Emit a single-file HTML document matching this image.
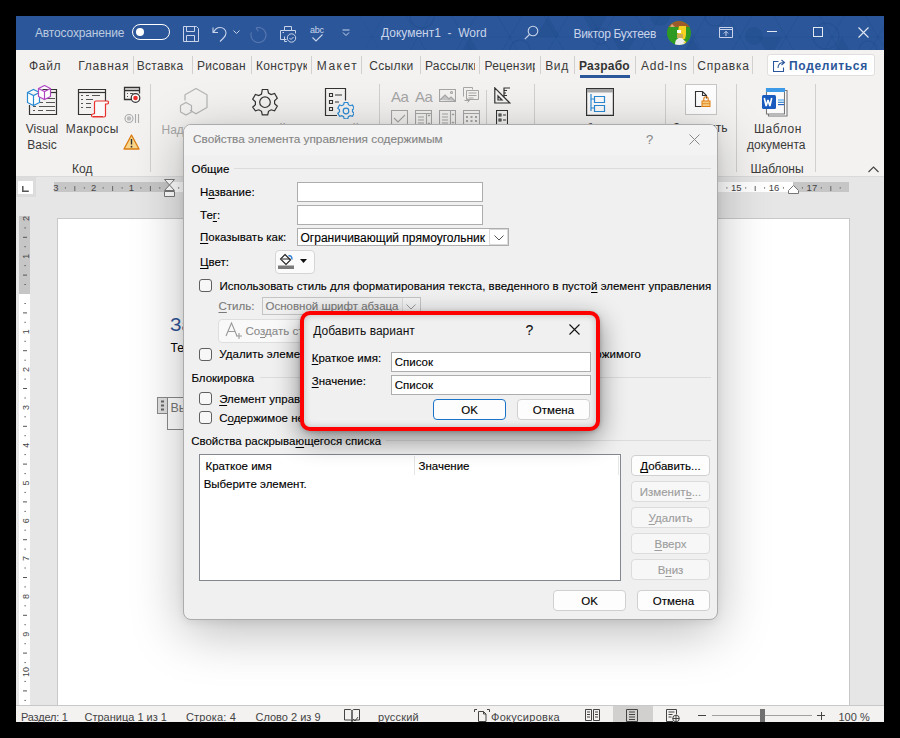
<!DOCTYPE html>
<html><head><meta charset="utf-8">
<style>
*{box-sizing:border-box}
body{margin:0;width:900px;height:738px;background:#000;position:relative;overflow:hidden;font-family:"Liberation Sans",sans-serif;color:#000}
.a{position:absolute}
.t{position:absolute;white-space:nowrap;line-height:1}
.dt,.btn{-webkit-text-stroke:0.12px currentColor}
#title{left:16px;top:16px;width:868px;height:34px;background:#2b579a}
#tabs{left:16px;top:50px;width:868px;height:32px;background:#f3f2f1}
#ribbon{left:16px;top:82px;width:868px;height:95px;background:#f3f2f1;border-bottom:1px solid #dadada}
#docarea{left:16px;top:177px;width:868px;height:528px;background:#e6e6e6}
#status{left:16px;top:705px;width:868px;height:17px;background:#f3f2f1;border-top:1px solid #c8c8c8}
.tab{position:absolute;top:60px;font-size:12px;color:#3b3a39;white-space:nowrap;line-height:12px}
.sep{position:absolute;top:56px;width:1px;height:18px;background:#d2d0ce}
.rsep{position:absolute;width:1px;background:#d2d0ce}
.rl{position:absolute;font-size:12px;color:#3b3a39;white-space:nowrap;line-height:15.5px;text-align:center}
.st{position:absolute;top:712px;font-size:11px;color:#444;white-space:nowrap;line-height:11px}
/* dialog */
#dlg{left:183px;top:124px;width:535px;height:496px;background:#f0f0f0;border:1px solid #ababab;border-radius:8px;box-shadow:0 12px 52px rgba(0,0,0,.27), 0 2px 8px rgba(0,0,0,.08);overflow:hidden}
.d{position:absolute;font-size:11.5px;white-space:nowrap;line-height:12px;color:#000}
.inp{position:absolute;background:#fff;border:1px solid #adadad}
.cb{position:absolute;width:13px;height:13px;border:1px solid #5f5f5f;border-radius:3px;background:#f7f7f7}
.btn{position:absolute;background:#fdfdfd;border:1px solid #d0d0d0;border-radius:4px;font-size:11.5px;text-align:center;line-height:18px;color:#000}
.btn.dis{color:#9d9d9d;background:#f7f7f7;border-color:#dcdcdc}
.gl{position:absolute;height:1px;background:#dcdcdc}
u{text-decoration:underline;text-underline-offset:1.5px;text-decoration-thickness:1px}
#sub{left:300px;top:311px;width:300px;height:120px;border:4px solid #f00;border-radius:10px;background:#f0f0f0;box-shadow:0 8px 26px rgba(0,0,0,.45), 0 1px 4px rgba(0,0,0,.2), inset 0 0 7px rgba(0,0,0,.22)}
</style></head>
<body>
<!-- window -->
<div id="title" class="a"></div>
<svg class="a" style="left:0;top:16px" width="884" height="34" viewBox="0 0 884 34"><defs><linearGradient id="fadeg" x1="0" x2="1"><stop offset="0" stop-color="#fff" stop-opacity="0"/><stop offset="1" stop-color="#fff" stop-opacity="1"/></linearGradient><mask id="pm"><rect x="340" y="0" width="60" height="34" fill="url(#fadeg)"/><rect x="400" y="0" width="484" height="34" fill="#fff"/></mask></defs><g mask="url(#pm)"><path d="M176 42 L200 0 M176 0 L200 42 M222 42 L246 0 M222 0 L246 42 M268 42 L292 0 M268 0 L292 42 M314 42 L338 0 M314 0 L338 42 M360 42 L384 0 M360 0 L384 42 M406 42 L430 0 M406 0 L430 42 M452 42 L476 0 M452 0 L476 42 M498 42 L522 0 M498 0 L522 42 M544 42 L568 0 M544 0 L568 42 M590 42 L614 0 M590 0 L614 42 M636 42 L660 0 M636 0 L660 42 M682 42 L706 0 M682 0 L706 42 M728 42 L752 0 M728 0 L752 42 M774 42 L798 0 M774 0 L798 42 M820 42 L844 0 M820 0 L844 42 M866 42 L890 0 M866 0 L890 42 M912 42 L936 0 M912 0 L936 42 M958 42 L982 0 M958 0 L982 42 M1004 42 L1028 0 M1004 0 L1028 42 M1050 42 L1074 0 M1050 0 L1074 42 M1096 42 L1120 0 M1096 0 L1120 42 M1142 42 L1166 0 M1142 0 L1166 42 M1188 42 L1212 0 M1188 0 L1212 42 M1234 42 L1258 0 M1234 0 L1258 42 M360 21 H884" stroke="#1e4a8a" stroke-opacity="0.35" stroke-width="1" fill="none"/><path d="M536 21 L548 0 L560 21z" fill="#1e4a8a" fill-opacity="0.35"/><path d="M612 21 L624 42 L636 21z" fill="#1e4a8a" fill-opacity="0.35"/><path d="M680 42 L692 21 L704 42z" fill="#1e4a8a" fill-opacity="0.35"/><path d="M758 21 L770 42 L782 21z" fill="#1e4a8a" fill-opacity="0.35"/><path d="M830 42 L842 21 L854 42z" fill="#1e4a8a" fill-opacity="0.35"/><path d="M458 42 L470 21 L482 42z" fill="#1e4a8a" fill-opacity="0.35"/><path d="M583 0 L595 21 L607 0z" fill="#1e4a8a" fill-opacity="0.35"/><circle cx="754" cy="20" r="9" fill="#1e4a8a" fill-opacity="0.4"/><circle cx="826" cy="20" r="13" fill="none" stroke="#1e4a8a" stroke-opacity="0.45" stroke-width="1.2"/><circle cx="715" cy="0" r="10" fill="none" stroke="#1e4a8a" stroke-opacity="0.45" stroke-width="1.2"/><circle cx="422" cy="0" r="12" fill="none" stroke="#1e4a8a" stroke-opacity="0.45" stroke-width="1.2"/><circle cx="600" cy="20" r="8" fill="none" stroke="#1e4a8a" stroke-opacity="0.45" stroke-width="1.2"/><circle cx="660" cy="0" r="10" fill="#1e4a8a" fill-opacity="0.4"/><circle cx="868" cy="34" r="9" fill="none" stroke="#1e4a8a" stroke-opacity="0.45" stroke-width="1.2"/><circle cx="520" cy="34" r="10" fill="none" stroke="#1e4a8a" stroke-opacity="0.45" stroke-width="1.2"/></g></svg>
<div class="t" style="left:35px;top:27px;font-size:12px;color:#bccae0;letter-spacing:-0.15px">Автосохранение</div>
<div class="a" style="left:132px;top:24px;width:38px;height:16px;border:1.5px solid #fff;border-radius:8px"></div>
<div class="a" style="left:136px;top:28px;width:8px;height:8px;background:#fff;border-radius:50%"></div>
<svg class="a" style="left:183px;top:26px" width="16" height="16" viewBox="0 0 16 16" fill="none" stroke="#c9d4ea" stroke-width="1"><path d="M0.5 0.5h13l2 2v13h-15z M3.5 0.5v5h8v-5 M3.5 15.5v-6h8v6"/></svg>
<svg class="a" style="left:212px;top:26px" width="16" height="16" viewBox="0 0 16 16" fill="none" stroke="#c9d4ea" stroke-width="1.1"><path d="M1 1.5v5h5 M1.5 6.5C3 3 5 1.5 8 1.5c3.5 0 6 2.5 6 5.5 0 2-1 3.5-2.5 5L8 15.5"/></svg>
<svg class="a" style="left:233px;top:30px" width="7" height="5" viewBox="0 0 7 5" fill="none" stroke="#c9d4ea" stroke-width="1"><path d="M0.5 0.5l3 3 3-3"/></svg>
<svg class="a" style="left:250px;top:26px" width="18" height="17" viewBox="0 0 18 17" fill="none" stroke="#5877b0" stroke-width="1.1"><path d="M5.94 1.95A7.5 7.5 0 1 1 1.45 6.43"/><path d="M6 2L10 1.2 M6 2L8.3 5.2"/></svg>
<svg class="a" style="left:280px;top:26px" width="17" height="17" viewBox="0 0 17 17" fill="none" stroke="#c9d4ea" stroke-width="1"><path d="M4.5 4.5v-4h7v4 M6.5 13.5h-6v-9h15v3 M4.5 10.5v5h2.5"/><circle cx="11.5" cy="12" r="4.2"/><path d="M9.5 12l1.5 1.5 2.5-2.5"/><path d="M2.5 6.5h1.5"/></svg>
<div class="t" style="left:310px;top:26px;font-size:9px;color:#c9d4ea;letter-spacing:-0.3px">abc</div>
<svg class="a" style="left:312px;top:34px" width="11" height="8" viewBox="0 0 11 8" fill="none" stroke="#c9d4ea" stroke-width="1.1"><path d="M0.5 3.5l3.5 3.5 6.5-6.5"/></svg>
<svg class="a" style="left:342px;top:29px" width="8" height="8" viewBox="0 0 8 8" fill="none" stroke="#c9d4ea" stroke-width="1"><path d="M0.5 1h7 M1 3.5l3 3 3-3"/></svg>
<div class="t" style="left:381px;top:27px;font-size:12px;color:#c9d4ea;letter-spacing:0px">Документ1&nbsp;&nbsp;-&nbsp;&nbsp;Word</div>
<svg class="a" style="left:524px;top:25px" width="15" height="15" viewBox="0 0 15 15" fill="none" stroke="#c9d4ea" stroke-width="1.1"><circle cx="9" cy="6" r="4.8"/><path d="M5.5 9.5L0.8 14.2"/></svg>
<div class="t" style="left:573.5px;top:28px;font-size:12px;color:#c9d4ea;letter-spacing:-0.3px">Виктор Бухтеев</div>
<svg class="a" style="left:667px;top:21px" width="24" height="24" viewBox="0 0 24 24"><defs><clipPath id="av"><circle cx="12" cy="12" r="12"/></clipPath></defs><g clip-path="url(#av)"><rect width="24" height="24" fill="#2e9a22"/><rect x="0" y="0" width="24" height="6" fill="#9b5a2a"/><path d="M3 6L5 3 8 6z" fill="#d9a87a"/><path d="M12 5h7v9l-1 4h-6l-2-3z" fill="#f4d020"/><path d="M10 9h4v3h-4z" fill="#fff"/><path d="M10 13h6v4h-6z" fill="#c8a95a"/><path d="M8 24c0-5 2-7 5-7s5 2 6 7z" fill="#ececec"/><path d="M16 22l3-2 1 3z" fill="#f4d020"/></g></svg>
<svg class="a" style="left:719px;top:27px" width="14" height="11" viewBox="0 0 14 11" fill="none" stroke="#c9d4ea" stroke-width="1"><path d="M0.5 0.5h13v10h-13z M0.5 2.5h13 M7 9V4.5 M4.8 6.5L7 4.3l2.2 2.2"/></svg>
<div class="a" style="left:767px;top:31px;width:10px;height:1px;background:#e3e9f3"></div>
<div class="a" style="left:813px;top:27px;width:10px;height:10px;border:1px solid #e3e9f3"></div>
<svg class="a" style="left:858px;top:27px" width="11" height="11" viewBox="0 0 11 11" stroke="#e3e9f3" stroke-width="1.1"><path d="M0.5 0.5l10 10 M10.5 0.5l-10 10"/></svg>
<div id="tabs" class="a"></div>
<div class="tab" style="left:29px;letter-spacing:0.67px">Файл</div>
<div class="tab" style="left:78.2px;letter-spacing:0.78px">Главная</div><div class="sep" style="left:133px"></div>
<div class="tab" style="left:136.8px;letter-spacing:0.28px">Вставка</div><div class="sep" style="left:192px"></div>
<div class="tab" style="left:197px;width:48.6px;overflow:hidden;letter-spacing:0.25px">Рисование</div><div class="sep" style="left:251px"></div>
<div class="tab" style="left:256px;width:51px;overflow:hidden;letter-spacing:0.35px">Конструктор</div><div class="sep" style="left:311px"></div>
<div class="tab" style="left:316.8px;letter-spacing:1.47px">Макет</div><div class="sep" style="left:361px"></div>
<div class="tab" style="left:369.2px;letter-spacing:0.36px">Ссылки</div><div class="sep" style="left:420px"></div>
<div class="tab" style="left:425px;width:50px;overflow:hidden;letter-spacing:0.2px">Рассылки</div><div class="sep" style="left:479px"></div>
<div class="tab" style="left:484.5px;width:50.5px;overflow:hidden;letter-spacing:0.2px">Рецензирование</div><div class="sep" style="left:540px"></div>
<div class="tab" style="left:545.2px;letter-spacing:0.65px">Вид</div><div class="sep" style="left:574px"></div>
<div class="tab" style="left:579px;font-weight:bold;color:#333;letter-spacing:0.2px">Разрабо</div>
<div class="a" style="left:580px;top:75px;width:50px;height:2.6px;background:#2b579a"></div><div class="sep" style="left:635px"></div>
<div class="tab" style="left:641px;letter-spacing:0.75px">Add-Ins</div><div class="sep" style="left:693px"></div>
<div class="tab" style="left:697.3px;letter-spacing:0.75px">Справка</div><div class="sep" style="left:752px"></div>
<div class="a" style="left:767px;top:54px;width:108px;height:22px;background:#fff;border:1px solid #e1dfdd;border-radius:3px"></div>
<svg class="a" style="left:773px;top:59px" width="13" height="13" viewBox="0 0 13 13" fill="none" stroke="#2b579a" stroke-width="1.1"><path d="M5.5 2.5h-5v10h10v-4 M5 9c0-4 2.5-5.5 6-5.5 M8.5 1l3 2.5-3 2.5"/></svg>
<div class="tab" style="left:789px;font-weight:bold;color:#2b579a;letter-spacing:0.69px">Поделиться</div>
<div id="ribbon" class="a"></div>
<!-- group Kod -->
<svg class="a" style="left:26px;top:85px" width="32" height="31" viewBox="0 0 32 31" fill="none">
<path d="M3.5 20v9.5h27v-25h-14" stroke="#333" stroke-width="1.2"/>
<path d="M25 7.5h5.5" stroke="#333" stroke-width="1.2"/>
<path d="M21 13.5h8 M14 17.5h3 M20 17.5h9 M7 21.5h3 M13 21.5h16 M7 25.5h2 M12 25.5h5 M20 25.5h9" stroke="#555" stroke-width="1.1"/>
<path d="M1.5 7.5l6-3 6 3v10l-6 3-6-3z M1.5 7.5l6 3 6-3 M7.5 10.5v10" stroke="#2a8ad4" stroke-width="1.2" fill="#fff"/>
<path d="M12.5 3.5l6-3 6 3v8l-6 3-6-3z M12.5 3.5l6 3 6-3 M18.5 6.5v8" stroke="#b146c2" stroke-width="1.2" fill="#fff"/>
</svg>
<div class="rl" style="left:22px;top:122px;width:40px">Visual<br>Basic</div>
<svg class="a" style="left:77px;top:88px" width="32" height="31" viewBox="0 0 32 31" fill="none">
<path d="M15 26.5H1.5v-25h27v12" stroke="#333" stroke-width="1.2"/>
<path d="M1.5 4.5h27" stroke="#333" stroke-width="1.2"/>
<path d="M4 7.5h2 M9 7.5h3 M15 7.5h8 M4 11.5h2 M9 11.5h7 M4 15.5h2 M9 15.5h5 M4 19.5h2 M9 19.5h5" stroke="#555" stroke-width="1.1"/>
<path d="M17.5 25.5v-11a1.5 1.5 0 0 1 1.5-1.5h11a1.5 1.5 0 0 1 0 3h-1.5v11.5a1.5 1.5 0 0 1-1.5 1.5h-11a1.5 1.5 0 0 1 0-3z M16 28.5h10" stroke="#e8302c" stroke-width="1.2" fill="#fafafa"/>
</svg>
<div class="rl" style="left:62px;top:122px;width:60px;letter-spacing:0.45px;text-indent:0.45px">Макросы</div>
<svg class="a" style="left:123px;top:86px" width="18" height="17" viewBox="0 0 18 17" fill="none">
<path d="M8 13.5H1.5v-12h15v6 M1.5 4.5h15" stroke="#333" stroke-width="1.3"/>
<path d="M4 7.5h1 M7 7.5h3 M4 10.5h1" stroke="#555" stroke-width="1"/>
<circle cx="12.5" cy="12" r="4.3" stroke="#333" stroke-width="1.2" fill="#fff"/><circle cx="12.5" cy="12" r="2.3" fill="#e8302c"/>
</svg>
<svg class="a" style="left:124px;top:113px" width="17" height="11" viewBox="0 0 17 11" fill="none" stroke="#aaa" stroke-width="1.1"><circle cx="5" cy="5.5" r="4"/><circle cx="5" cy="5.5" r="2.2" fill="#bbb" stroke="none"/><path d="M11.5 1v9 M14.5 1v9"/></svg>
<svg class="a" style="left:123px;top:134px" width="17" height="16" viewBox="0 0 17 16"><path d="M8.5 1L16 15H1z" fill="#f7d58a" stroke="#da7b12" stroke-width="1.3" stroke-linejoin="round"/><path d="M8.5 5v5.5" stroke="#333" stroke-width="1.4"/><circle cx="8.5" cy="12.7" r="0.9" fill="#333"/></svg>
<div class="t" style="left:72px;top:163px;font-size:12px;color:#3b3a39">Код</div>
<div class="rsep" style="left:150px;top:84px;height:88px"></div>
<!-- group addins -->
<svg class="a" style="left:179px;top:87px" width="30" height="30" viewBox="0 0 30 30" fill="none" stroke="#b3b3b3" stroke-width="1.2"><path d="M17 1.5l11 6.3v12.6l-11 6.3-6-3.4 M6 13.5v-5.7l11-6.3"/><path d="M7 15.5l5.5 3.1v6.3L7 28.1l-5.5-3.2v-6.3z"/></svg>
<div class="t" style="left:161.5px;top:124px;font-size:12px;color:#a6a6a6">Надстройки</div>
<svg class="a" style="left:250px;top:88px" width="30" height="29" viewBox="0 0 30 29" fill="none" stroke="#333" stroke-width="1.2"><path d="M12.3 1.5h5.4l0.8 3.6 2.6 1.5 3.5-1.1 2.7 4.7-2.7 2.5v3l2.7 2.5-2.7 4.7-3.5-1.1-2.6 1.5-0.8 3.6h-5.4l-0.8-3.6-2.6-1.5-3.5 1.1L2.7 19.2l2.7-2.5v-3L2.7 11.2 5.4 6.5l3.5 1.1 2.6-1.5z"/><circle cx="15" cy="14.2" r="5.3"/></svg>
<svg class="a" style="left:324px;top:87px" width="30" height="32" viewBox="0 0 30 32" fill="none">
<path d="M13 28.5H1.5v-27h20v12" stroke="#333" stroke-width="1.2"/>
<path d="M5.5 6.5h3v3h-3z M5.5 13.5h3v3h-3z M5.5 20.5h3v3h-3z M11 8h7 M11 15h4" stroke="#333" stroke-width="1.1"/>
<path d="M20.2 15.5h3.6l0.6 2.2 1.8 1 2.2-0.7 1.8 3.1-1.7 1.6v2l1.7 1.6-1.8 3.1-2.2-0.7-1.8 1-0.6 2.2h-3.6l-0.6-2.2-1.8-1-2.2 0.7-1.8-3.1 1.7-1.6v-2l-1.7-1.6 1.8-3.1 2.2 0.7 1.8-1z" stroke="#2a8ad4" stroke-width="1.2" fill="#f3f2f1"/><circle cx="22" cy="24" r="2.8" stroke="#2a8ad4" stroke-width="1.2"/>
</svg>
<div class="rl" style="left:225px;top:122px;width:80px">Надстройки<br>Word</div>
<div class="rl" style="left:298px;top:122px;width:80px">Надстройки<br>COM</div>
<div class="rl" style="left:560px;top:122px;width:80px">Область<br>сопоставления XML</div>
<div class="rsep" style="left:379px;top:84px;height:88px"></div>
<!-- group controls -->
<div class="t" style="left:391px;top:89px;font-size:15px;color:#a6a6a6;letter-spacing:-0.5px">Aa</div>
<div class="t" style="left:415px;top:89px;font-size:15px;color:#a6a6a6;letter-spacing:-0.5px;font-weight:normal">Aa</div>
<svg class="a" style="left:439px;top:89px" width="17" height="13" viewBox="0 0 17 13" fill="none" stroke="#a6a6a6" stroke-width="1.1"><path d="M0.5 0.5h16v12h-16z"/><path d="M1 11l5-5 4 4 2-2 4 4" fill="#c8c8c8"/><circle cx="12.5" cy="3.5" r="1"/></svg>
<svg class="a" style="left:463px;top:87px" width="16" height="16" viewBox="0 0 16 16" fill="none" stroke="#a6a6a6" stroke-width="1"><path d="M0.5 9.5v-9h9v2 M3.5 12.5v-9h12v9h-12z M5.5 6h8 M5.5 8.5h8 M5.5 11h5 M1.5 13.5h5 M4.5 11.5l2 2-2 2"/></svg>
<svg class="a" style="left:391px;top:110px" width="17" height="17" viewBox="0 0 17 17" fill="none" stroke="#a6a6a6" stroke-width="1.1"><path d="M0.5 0.5h16v16h-16z M3 8l4 4 7-7"/></svg>
<svg class="a" style="left:415px;top:110px" width="17" height="17" viewBox="0 0 17 17" fill="none" stroke="#a6a6a6" stroke-width="1.1"><path d="M0.5 0.5h16v16h-16z M0.5 3.5h16 M11.5 3.5v13 M3 7h6 M3 10h6 M3 13h6 M13 6l1-1 1 1 M13 13l1 1 1-1"/></svg>
<svg class="a" style="left:439px;top:110px" width="17" height="17" viewBox="0 0 17 17" fill="none" stroke="#a6a6a6" stroke-width="1.1"><path d="M0.5 0.5h16v16h-16z M11.5 0.5v16 M3 4h6 M3 7h6 M3 10h6 M3 13h6 M13 5l1-1 1 1 M13 12l1 1 1-1"/></svg>
<svg class="a" style="left:463px;top:110px" width="17" height="17" viewBox="0 0 17 17" fill="none" stroke="#a6a6a6" stroke-width="1.1"><path d="M0.5 0.5h16v16h-16z M0.5 3.5h16"/><path d="M3 6h2v2H3z M7.5 6h2v2h-2z M12 6h2v2h-2z M3 10h2v2H3z M7.5 10h2v2h-2z M12 10h2v2h-2z M3 14h2v1H3z M7.5 14h2v1h-2z" fill="#a6a6a6" stroke="none"/></svg>
<div class="rsep" style="left:486px;top:90px;height:82px"></div>
<svg class="a" style="left:494px;top:87px" width="17" height="17" viewBox="0 0 17 17" fill="none" stroke="#333" stroke-width="1.2"><path d="M0.8 0.8l15 15.2H0.8z M4 9v4h4z M16 1L10 1v10 M10 3.5h3 M10 6h2 M10 8.5h3"/></svg>
<svg class="a" style="left:496px;top:110px" width="12" height="17" viewBox="0 0 12 17" fill="none" stroke="#333" stroke-width="1.1"><path d="M0.5 0.5h11v16h-11z M3 4h2v2H3z M3 9h2v2H3z M7 5h3 M7 10h3"/></svg>
<div class="rsep" style="left:534px;top:84px;height:88px"></div>
<svg class="a" style="left:586px;top:88px" width="28" height="28" viewBox="0 0 28 28" fill="none"><path d="M0.6 0.6h26.8v26.8H0.6z" stroke="#333" stroke-width="1.2" fill="#fafafa"/><rect x="1" y="1" width="26" height="3.5" fill="#a8a8a8"/><path d="M5 6v17 M5 11h3 M5 20h3 M8.5 8.5h10v6h-10z M8.5 17.5h10v6h-10z" stroke="#2a8ad4" stroke-width="1.2"/></svg>
<div class="rsep" style="left:665px;top:84px;height:88px"></div>
<div class="a" style="left:685px;top:84px;width:32px;height:31px;background:#fdfdfd;border:1px solid #c8c6c4"></div>
<svg class="a" style="left:694px;top:90px" width="18" height="18" viewBox="0 0 18 18" fill="none"><path d="M7.5 16.5H1.5v-15h7l4 4v3 M8.5 1.5v4h4" stroke="#333" stroke-width="1.1"/><rect x="8" y="11" width="8" height="5.5" fill="#f8cf86" stroke="#e47f12" stroke-width="1"/><path d="M9.8 11v-2a2.2 2.2 0 0 1 4.4 0v2" stroke="#e47f12" stroke-width="1.1"/><path d="M8 13.7h8" stroke="#e47f12" stroke-width="0.8"/></svg>
<div class="t" style="left:673px;top:121.5px;font-size:12px;color:#3b3a39">Защитить</div>
<div class="rsep" style="left:736px;top:84px;height:88px"></div>
<svg class="a" style="left:761px;top:87px" width="28" height="30" viewBox="0 0 28 30" fill="none"><path d="M7.5 3.5h18.5v25.5H7.5z" stroke="#777" stroke-width="1.1" fill="#fff"/><path d="M5.5 1.5h18v25.5h-18z" stroke="#777" stroke-width="1.1" fill="#fafafa"/><rect x="5" y="1" width="19" height="4" fill="#3d9ae8"/><path d="M17 13h6" stroke="#41a5ee" stroke-width="1.1"/><path d="M17 15.3h6" stroke="#2b7cd3" stroke-width="1.1"/><path d="M17 17.6h6" stroke="#185abd" stroke-width="1.1"/><rect x="1" y="8" width="14" height="14" rx="1.5" fill="#185abd"/><path d="M3.3 11l1.8 8 1.9-6 1.9 6 1.8-8" stroke="#fff" stroke-width="1.6" fill="none" stroke-linejoin="bevel"/></svg>
<div class="t" style="left:754px;top:122.5px;font-size:12px;color:#3b3a39;letter-spacing:0.6px">Шаблон</div><div class="t" style="left:747px;top:138.5px;font-size:12px;color:#3b3a39">документа</div>
<div class="t" style="left:750.5px;top:163px;font-size:12px;color:#3b3a39">Шаблоны</div>
<div class="rsep" style="left:815px;top:84px;height:88px"></div>
<svg class="a" style="left:868px;top:166px" width="11" height="7" viewBox="0 0 11 7" fill="none" stroke="#444" stroke-width="1.1"><path d="M0.5 6l5-5 5 5"/></svg>
<div id="docarea" class="a"></div>
<div class="a" style="left:16px;top:177px;width:20px;height:20px;background:#dcdcdc"></div>
<div class="a" style="left:18px;top:181px;width:14.5px;height:13px;background:#fff"></div>
<svg class="a" style="left:22px;top:186px" width="7" height="6" viewBox="0 0 7 6"><path d="M0.8 0v5.2h6" stroke="#555" stroke-width="1.5" fill="none"/></svg>
<div class="a" style="left:54px;top:182px;width:116px;height:10px;background:#c6c6c6"></div>
<div class="a" style="left:170px;top:182px;width:623px;height:10px;background:#fff"></div>
<div class="a" style="left:793px;top:182px;width:56px;height:10px;background:#c6c6c6"></div>
<svg class="a" style="left:0;top:177px" width="900" height="30" viewBox="0 0 900 30"><text x="55.9" y="14" font-family="Liberation Sans" font-size="9.5" fill="#444" text-anchor="middle">3</text><rect x="64.9" y="10.3" width="1" height="1.2" fill="#555"/><rect x="74.3" y="9" width="1" height="5" fill="#666"/><rect x="83.8" y="10.3" width="1" height="1.2" fill="#555"/><text x="93.7" y="14" font-family="Liberation Sans" font-size="9.5" fill="#444" text-anchor="middle">2</text><rect x="102.7" y="10.3" width="1" height="1.2" fill="#555"/><rect x="112.1" y="9" width="1" height="5" fill="#666"/><rect x="121.6" y="10.3" width="1" height="1.2" fill="#555"/><text x="131.5" y="14" font-family="Liberation Sans" font-size="9.5" fill="#444" text-anchor="middle">1</text><rect x="140.4" y="10.3" width="1" height="1.2" fill="#555"/><rect x="149.9" y="9" width="1" height="5" fill="#666"/><rect x="159.3" y="10.3" width="1" height="1.2" fill="#555"/><rect x="178.2" y="10.3" width="1" height="1.2" fill="#555"/><rect x="187.7" y="9" width="1" height="5" fill="#666"/><rect x="197.2" y="10.3" width="1" height="1.2" fill="#555"/><text x="207.1" y="14" font-family="Liberation Sans" font-size="9.5" fill="#444" text-anchor="middle">1</text><rect x="216.1" y="10.3" width="1" height="1.2" fill="#555"/><rect x="225.5" y="9" width="1" height="5" fill="#666"/><rect x="235.0" y="10.3" width="1" height="1.2" fill="#555"/><text x="244.9" y="14" font-family="Liberation Sans" font-size="9.5" fill="#444" text-anchor="middle">2</text><rect x="253.8" y="10.3" width="1" height="1.2" fill="#555"/><rect x="263.3" y="9" width="1" height="5" fill="#666"/><rect x="272.8" y="10.3" width="1" height="1.2" fill="#555"/><text x="282.7" y="14" font-family="Liberation Sans" font-size="9.5" fill="#444" text-anchor="middle">3</text><rect x="291.6" y="10.3" width="1" height="1.2" fill="#555"/><rect x="301.1" y="9" width="1" height="5" fill="#666"/><rect x="310.6" y="10.3" width="1" height="1.2" fill="#555"/><text x="320.5" y="14" font-family="Liberation Sans" font-size="9.5" fill="#444" text-anchor="middle">4</text><rect x="329.4" y="10.3" width="1" height="1.2" fill="#555"/><rect x="338.9" y="9" width="1" height="5" fill="#666"/><rect x="348.4" y="10.3" width="1" height="1.2" fill="#555"/><text x="358.3" y="14" font-family="Liberation Sans" font-size="9.5" fill="#444" text-anchor="middle">5</text><rect x="367.2" y="10.3" width="1" height="1.2" fill="#555"/><rect x="376.7" y="9" width="1" height="5" fill="#666"/><rect x="386.2" y="10.3" width="1" height="1.2" fill="#555"/><text x="396.1" y="14" font-family="Liberation Sans" font-size="9.5" fill="#444" text-anchor="middle">6</text><rect x="405.1" y="10.3" width="1" height="1.2" fill="#555"/><rect x="414.5" y="9" width="1" height="5" fill="#666"/><rect x="424.0" y="10.3" width="1" height="1.2" fill="#555"/><text x="433.9" y="14" font-family="Liberation Sans" font-size="9.5" fill="#444" text-anchor="middle">7</text><rect x="442.8" y="10.3" width="1" height="1.2" fill="#555"/><rect x="452.3" y="9" width="1" height="5" fill="#666"/><rect x="461.8" y="10.3" width="1" height="1.2" fill="#555"/><text x="471.7" y="14" font-family="Liberation Sans" font-size="9.5" fill="#444" text-anchor="middle">8</text><rect x="480.6" y="10.3" width="1" height="1.2" fill="#555"/><rect x="490.1" y="9" width="1" height="5" fill="#666"/><rect x="499.6" y="10.3" width="1" height="1.2" fill="#555"/><text x="509.5" y="14" font-family="Liberation Sans" font-size="9.5" fill="#444" text-anchor="middle">9</text><rect x="518.5" y="10.3" width="1" height="1.2" fill="#555"/><rect x="527.9" y="9" width="1" height="5" fill="#666"/><rect x="537.4" y="10.3" width="1" height="1.2" fill="#555"/><text x="547.3" y="14" font-family="Liberation Sans" font-size="9.5" fill="#444" text-anchor="middle">10</text><rect x="556.2" y="10.3" width="1" height="1.2" fill="#555"/><rect x="565.7" y="9" width="1" height="5" fill="#666"/><rect x="575.1" y="10.3" width="1" height="1.2" fill="#555"/><text x="585.1" y="14" font-family="Liberation Sans" font-size="9.5" fill="#444" text-anchor="middle">11</text><rect x="594.0" y="10.3" width="1" height="1.2" fill="#555"/><rect x="603.5" y="9" width="1" height="5" fill="#666"/><rect x="612.9" y="10.3" width="1" height="1.2" fill="#555"/><text x="622.9" y="14" font-family="Liberation Sans" font-size="9.5" fill="#444" text-anchor="middle">12</text><rect x="631.9" y="10.3" width="1" height="1.2" fill="#555"/><rect x="641.3" y="9" width="1" height="5" fill="#666"/><rect x="650.8" y="10.3" width="1" height="1.2" fill="#555"/><text x="660.7" y="14" font-family="Liberation Sans" font-size="9.5" fill="#444" text-anchor="middle">13</text><rect x="669.7" y="10.3" width="1" height="1.2" fill="#555"/><rect x="679.1" y="9" width="1" height="5" fill="#666"/><rect x="688.6" y="10.3" width="1" height="1.2" fill="#555"/><text x="698.5" y="14" font-family="Liberation Sans" font-size="9.5" fill="#444" text-anchor="middle">14</text><rect x="707.5" y="10.3" width="1" height="1.2" fill="#555"/><rect x="716.9" y="9" width="1" height="5" fill="#666"/><rect x="726.4" y="10.3" width="1" height="1.2" fill="#555"/><text x="736.3" y="14" font-family="Liberation Sans" font-size="9.5" fill="#444" text-anchor="middle">15</text><rect x="745.2" y="10.3" width="1" height="1.2" fill="#555"/><rect x="754.7" y="9" width="1" height="5" fill="#666"/><rect x="764.1" y="10.3" width="1" height="1.2" fill="#555"/><text x="774.1" y="14" font-family="Liberation Sans" font-size="9.5" fill="#444" text-anchor="middle">16</text><rect x="783.0" y="10.3" width="1" height="1.2" fill="#555"/><rect x="792.5" y="9" width="1" height="5" fill="#666"/><rect x="801.9" y="10.3" width="1" height="1.2" fill="#555"/><text x="811.9" y="14" font-family="Liberation Sans" font-size="9.5" fill="#444" text-anchor="middle">17</text><rect x="820.8" y="10.3" width="1" height="1.2" fill="#555"/><rect x="830.3" y="9" width="1" height="5" fill="#666"/><rect x="839.7" y="10.3" width="1" height="1.2" fill="#555"/></svg>
<svg class="a" style="left:164px;top:179px" width="11" height="23" viewBox="0 0 11 23" fill="#fff" stroke="#777" stroke-width="1"><path d="M0.5 0.5h10L5.5 6z M5.5 6l5 5.5h-10z M0.5 12.5h10v5h-10z"/></svg>
<svg class="a" style="left:788px;top:185px" width="11" height="9" viewBox="0 0 11 9" fill="#fff" stroke="#777" stroke-width="1"><path d="M5.5 0.5l5 5v3h-10v-3z"/></svg>
<div class="a" style="left:19px;top:216px;width:11px;height:78px;background:#c6c6c6"></div>
<div class="a" style="left:19px;top:294px;width:11px;height:411px;background:#fff"></div>
<svg class="a" style="left:16px;top:200px" width="20" height="505" viewBox="0 0 20 505"><text x="0" y="0" transform="translate(12.5 18.4) rotate(-90)" font-family="Liberation Sans" font-size="9" fill="#444" text-anchor="middle">2</text><rect x="8.5" y="27.4" width="1.2" height="1" fill="#444"/><rect x="7" y="36.8" width="4" height="1" fill="#555"/><rect x="8.5" y="46.2" width="1.2" height="1" fill="#444"/><text x="0" y="0" transform="translate(12.5 56.2) rotate(-90)" font-family="Liberation Sans" font-size="9" fill="#444" text-anchor="middle">1</text><rect x="8.5" y="65.1" width="1.2" height="1" fill="#444"/><rect x="7" y="74.6" width="4" height="1" fill="#555"/><rect x="8.5" y="84.0" width="1.2" height="1" fill="#444"/><rect x="8.5" y="103.0" width="1.2" height="1" fill="#444"/><rect x="7" y="112.4" width="4" height="1" fill="#555"/><rect x="8.5" y="121.8" width="1.2" height="1" fill="#444"/><text x="0" y="0" transform="translate(12.5 131.8) rotate(-90)" font-family="Liberation Sans" font-size="9" fill="#444" text-anchor="middle">1</text><rect x="8.5" y="140.8" width="1.2" height="1" fill="#444"/><rect x="7" y="150.2" width="4" height="1" fill="#555"/><rect x="8.5" y="159.7" width="1.2" height="1" fill="#444"/><text x="0" y="0" transform="translate(12.5 169.6) rotate(-90)" font-family="Liberation Sans" font-size="9" fill="#444" text-anchor="middle">2</text><rect x="8.5" y="178.6" width="1.2" height="1" fill="#444"/><rect x="7" y="188.0" width="4" height="1" fill="#555"/><rect x="8.5" y="197.5" width="1.2" height="1" fill="#444"/><text x="0" y="0" transform="translate(12.5 207.4) rotate(-90)" font-family="Liberation Sans" font-size="9" fill="#444" text-anchor="middle">3</text><rect x="8.5" y="216.3" width="1.2" height="1" fill="#444"/><rect x="7" y="225.8" width="4" height="1" fill="#555"/><rect x="8.5" y="235.2" width="1.2" height="1" fill="#444"/><text x="0" y="0" transform="translate(12.5 245.2) rotate(-90)" font-family="Liberation Sans" font-size="9" fill="#444" text-anchor="middle">4</text><rect x="8.5" y="254.1" width="1.2" height="1" fill="#444"/><rect x="7" y="263.6" width="4" height="1" fill="#555"/><rect x="8.5" y="273.1" width="1.2" height="1" fill="#444"/><text x="0" y="0" transform="translate(12.5 283.0) rotate(-90)" font-family="Liberation Sans" font-size="9" fill="#444" text-anchor="middle">5</text><rect x="8.5" y="291.9" width="1.2" height="1" fill="#444"/><rect x="7" y="301.4" width="4" height="1" fill="#555"/><rect x="8.5" y="310.9" width="1.2" height="1" fill="#444"/><text x="0" y="0" transform="translate(12.5 320.8) rotate(-90)" font-family="Liberation Sans" font-size="9" fill="#444" text-anchor="middle">6</text><rect x="8.5" y="329.7" width="1.2" height="1" fill="#444"/><rect x="7" y="339.2" width="4" height="1" fill="#555"/><rect x="8.5" y="348.6" width="1.2" height="1" fill="#444"/><text x="0" y="0" transform="translate(12.5 358.6) rotate(-90)" font-family="Liberation Sans" font-size="9" fill="#444" text-anchor="middle">7</text><rect x="8.5" y="367.5" width="1.2" height="1" fill="#444"/><rect x="7" y="377.0" width="4" height="1" fill="#555"/><rect x="8.5" y="386.4" width="1.2" height="1" fill="#444"/><text x="0" y="0" transform="translate(12.5 396.4) rotate(-90)" font-family="Liberation Sans" font-size="9" fill="#444" text-anchor="middle">8</text><rect x="8.5" y="405.3" width="1.2" height="1" fill="#444"/><rect x="7" y="414.8" width="4" height="1" fill="#555"/><rect x="8.5" y="424.2" width="1.2" height="1" fill="#444"/><text x="0" y="0" transform="translate(12.5 434.2) rotate(-90)" font-family="Liberation Sans" font-size="9" fill="#444" text-anchor="middle">9</text><rect x="8.5" y="443.2" width="1.2" height="1" fill="#444"/><rect x="7" y="452.6" width="4" height="1" fill="#555"/><rect x="8.5" y="462.1" width="1.2" height="1" fill="#444"/><text x="0" y="0" transform="translate(12.5 472.0) rotate(-90)" font-family="Liberation Sans" font-size="9" fill="#444" text-anchor="middle">10</text><rect x="8.5" y="480.9" width="1.2" height="1" fill="#444"/><rect x="7" y="490.4" width="4" height="1" fill="#555"/><rect x="8.5" y="499.9" width="1.2" height="1" fill="#444"/></svg>
<div class="a" style="left:57px;top:218px;width:793px;height:487px;background:#fff;border-left:1px solid #c8c8c8;border-top:1px solid #c8c8c8;border-right:1px solid #c8c8c8"></div>
<div class="t" style="left:170px;top:315px;font-size:19px;color:#2f5496">Заголовок</div>
<div class="t" style="left:170.5px;top:341.5px;font-size:12px;color:#000">Текст</div>
<div class="a" style="left:157px;top:397px;width:11px;height:17px;background:#e0e0e0;border:1px solid #8a8a8a"></div>
<svg class="a" style="left:160px;top:399.5px" width="5" height="12" viewBox="0 0 5 12" fill="#666"><rect x="1" y="0.5" width="3" height="2"/><rect x="1" y="4.5" width="3" height="2"/><rect x="1" y="8.5" width="3" height="2"/></svg>
<div class="a" style="left:167px;top:397px;width:40px;height:33px;background:#fff;border:1px solid #8a8a8a"></div>
<div class="t" style="left:170.5px;top:401.5px;font-size:12.5px;color:#767676">Выберите элемент.</div>
<div id="status" class="a"></div>
<div class="st" style="left:21px;letter-spacing:-0.2px">Раздел: 1</div>
<div class="st" style="left:84.5px;">Страница 1 из 1</div>
<div class="st" style="left:186px;letter-spacing:0.15px">Строка: 4</div>
<div class="st" style="left:255.5px;">Слово 2 из 9</div>
<svg class="a" style="left:344px;top:709px" width="16" height="13" viewBox="0 0 16 13" fill="none" stroke="#444" stroke-width="1"><path d="M0.5 0.5h5.5c1 0 2 1 2 2v10c0-1-1-1.5-2-1.5H0.5z M15.5 0.5H10c-1 0-2 1-2 2v10c0-1 1-1.5 2-1.5h5.5z M9 10l2 2 3-4"/></svg>
<div class="st" style="left:378px;letter-spacing:0.2px">русский</div>
<svg class="a" style="left:474px;top:709px" width="16" height="13" viewBox="0 0 16 13" fill="none" stroke="#444" stroke-width="1"><path d="M0.5 3V0.5H3 M13 0.5h2.5V3 M4.5 12.5v-10h5l2.5 2.5v7.5z M9.5 2.5V5H12"/></svg>
<div class="st" style="left:491px;letter-spacing:0.3px">Фокусировка</div>
<svg class="a" style="left:585px;top:709px" width="15" height="12" viewBox="0 0 15 12" fill="none" stroke="#444" stroke-width="1"><path d="M0.5 0.5h6v11h-6z M8.5 0.5h6v11h-6z M2 3h3 M2 5.5h3 M2 8h3 M10 3h3 M10 5.5h3 M10 8h3"/></svg>
<div class="a" style="left:613px;top:706px;width:40px;height:16px;background:#d2d0ce"></div>
<svg class="a" style="left:626px;top:709px" width="12" height="13" viewBox="0 0 12 13" fill="none" stroke="#444" stroke-width="1"><path d="M0.5 0.5h11v12h-11z M3 3h6 M3 5.5h6 M3 8h6 M3 10.5h6"/></svg>
<svg class="a" style="left:666px;top:709px" width="14" height="13" viewBox="0 0 14 13" fill="none" stroke="#444" stroke-width="1"><path d="M7 12.5H0.5v-12h10v5 M2.5 3h6 M2.5 5.5h4 M2.5 8h3"/><circle cx="10" cy="9.5" r="3.3"/><path d="M6.7 9.5h6.6 M10 6.2v6.6"/></svg>
<div class="a" style="left:698px;top:715px;width:8px;height:1px;background:#444"></div>
<div class="a" style="left:712px;top:715px;width:100px;height:1px;background:#a0a0a0"></div>
<div class="a" style="left:760px;top:709px;width:5px;height:13px;background:#707070"></div>
<div class="a" style="left:817px;top:715px;width:8px;height:1px;background:#444"></div><div class="a" style="left:820.5px;top:711.5px;width:1px;height:8px;background:#444"></div>
<div class="st" style="left:838.5px;">100 %</div>

<!-- main dialog -->
<div id="dlg" class="a"></div>
<div class="a" style="left:184px;top:125px;width:533px;height:30px;background:#f3f3f3;border-radius:7px 7px 0 0"></div>
<div class="t dt" style="left:193px;top:134.2px;font-size:11.8px;color:#858585;">Свойства элемента управления содержимым</div>
<div class="t dt" style="left:646px;top:133.0px;font-size:13px;color:#8a8a8a;">?</div>
<svg class="a" style="left:689px;top:134px" width="11" height="11" viewBox="0 0 11 11" stroke="#8a8a8a" stroke-width="1"><path d="M0.5 0.5l10 10 M10.5 0.5l-10 10"/></svg>
<div class="t dt" style="left:191.5px;top:163.9px;font-size:11.5px;color:#000;">Общие</div>
<div class="gl" style="left:234px;top:168px;width:477px"></div>
<div class="t dt" style="left:200px;top:186.9px;font-size:11.5px;color:#000;">Н<u>а</u>звание:</div>
<div class="inp" style="left:297px;top:182px;width:186px;height:20px"></div>
<div class="t dt" style="left:200px;top:209.8px;font-size:11.5px;color:#000;">Те<u>г</u>:</div>
<div class="inp" style="left:297px;top:205px;width:186px;height:20px"></div>
<div class="t dt" style="left:200px;top:231.9px;font-size:11.5px;color:#000;"><u>П</u>оказывать как:</div>
<div class="inp" style="left:297px;top:228px;width:212px;height:18px"></div>
<div class="t dt" style="left:300.5px;top:231.8px;font-size:12px;color:#000;">Ограничивающий прямоугольник</div>
<div class="a" style="left:489px;top:229px;width:19px;height:16px;background:#fff;border:1px solid #d9d9d9"></div>
<svg class="a" style="left:494px;top:235px" width="10" height="6" viewBox="0 0 10 6" fill="none" stroke="#555" stroke-width="1"><path d="M0.5 0.5l4.5 4.5 4.5-4.5"/></svg>
<div class="t dt" style="left:200px;top:256.8px;font-size:11.5px;color:#000;"><u>Ц</u>вет:</div>
<div class="a" style="left:275px;top:250px;width:40px;height:24px;background:#fbfbfb;border:1px solid #d5d5d5;border-radius:4px"></div>
<svg class="a" style="left:278px;top:253px" width="32" height="17" viewBox="0 0 32 17"><path d="M7 1.5l5.5 5.5-4.5 4.5-5.5-5.5z" fill="#fff" stroke="#222" stroke-width="1.1"/><path d="M4 6l8.5 0" stroke="#222" stroke-width="1"/><path d="M10.5 3c2-1 3.5 0.5 3.5 3.5" fill="none" stroke="#2a7ad4" stroke-width="1.4"/><rect x="0" y="12.5" width="16" height="3.5" fill="#7a7a7a"/><path d="M22 6h7l-3.5 4z" fill="#111"/></svg>
<div class="cb" style="left:199px;top:279px"></div>
<div class="t dt" style="left:219.5px;top:280.9px;font-size:11.5px;color:#000;">Использовать стиль для форматирования текста, введенного в пусто<u>й</u> элемент управления</div>
<div class="t dt" style="left:218.5px;top:301.1px;font-size:11.5px;color:#7a7a7a;"><u>С</u>тиль:</div>
<div class="inp" style="left:262px;top:297px;width:159px;height:18px;background:#f0f0f0;border-color:#c4c4c4"></div>
<div class="t dt" style="left:265.5px;top:301.1px;font-size:11.5px;color:#7a7a7a;">Основной шрифт абзаца</div>
<div class="a" style="left:402px;top:298px;width:18px;height:16px;background:#f3f3f3;border-left:1px solid #dadada"></div>
<svg class="a" style="left:406px;top:304px" width="10" height="6" viewBox="0 0 10 6" fill="none" stroke="#999" stroke-width="1"><path d="M0.5 0.5l4.5 4.5 4.5-4.5"/></svg>
<div class="a" style="left:218px;top:319px;width:120px;height:24px;background:#f9f9f9;border:1px solid #dedede;border-radius:4px"></div>
<svg class="a" style="left:225px;top:322px" width="18" height="18" viewBox="0 0 18 18" fill="none" stroke="#9a9a9a" stroke-width="1.1"><path d="M1 14L6.5 1 12 14 M3 9.5h7 M14 11v6 M11 14h6"/></svg>
<div class="t dt" style="left:245.5px;top:326.1px;font-size:11.5px;color:#8a8a8a;">Со<u>з</u>дать стиль...</div>
<div class="cb" style="left:199px;top:348px"></div>
<div class="t dt" style="left:219.2px;top:349.3px;font-size:11.5px;color:#000;;letter-spacing:0.07px">Удалить элемент управления содержимого при редактировании содержимого</div>
<div class="t dt" style="left:191.4px;top:373.1px;font-size:11.5px;color:#000;">Блокировка</div>
<div class="gl" style="left:260px;top:377px;width:451px"></div>
<div class="cb" style="left:199px;top:392px"></div>
<div class="t dt" style="left:219.2px;top:393.6px;font-size:11.5px;color:#000;"><u>Э</u>лемент управления содержимым удалить нельзя</div>
<div class="cb" style="left:199px;top:411px"></div>
<div class="t dt" style="left:219.2px;top:413.3px;font-size:11.5px;color:#000;">С<u>о</u>держимое нельзя редактировать</div>
<div class="t dt" style="left:191.2px;top:435.9px;font-size:11.5px;color:#000;">Свойства раскрыва<u>ю</u>щегося списка</div>
<div class="gl" style="left:386px;top:440px;width:325px"></div>
<div class="a" style="left:199px;top:454px;width:422px;height:127px;background:#fff;border:1px solid #828790"></div>
<div class="t dt" style="left:205.5px;top:460.6px;font-size:11.5px;color:#000;">Краткое имя</div>
<div class="a" style="left:414px;top:456px;width:1px;height:19px;background:#e5e5e5"></div>
<div class="t dt" style="left:418.5px;top:460.6px;font-size:11.5px;color:#000;">Значение</div>
<div class="a" style="left:618px;top:456px;width:1px;height:19px;background:#e5e5e5"></div>
<div class="t dt" style="left:203.7px;top:478.7px;font-size:11.5px;color:#000;">Выберите элемент.</div>
<div class="btn" style="left:631px;top:455px;width:79px;height:21px;line-height:20.5px;"><u>Д</u>обавить...</div>
<div class="btn dis" style="left:631px;top:481px;width:79px;height:21px;line-height:20.5px;">Изменит<u>ь</u>...</div>
<div class="btn dis" style="left:631px;top:507px;width:79px;height:21px;line-height:20.5px;"><u>У</u>далить</div>
<div class="btn dis" style="left:631px;top:533px;width:79px;height:21px;line-height:20.5px;"><u>В</u>верх</div>
<div class="btn dis" style="left:631px;top:559px;width:79px;height:21px;line-height:20.5px;">В<u>н</u>из</div>
<div class="btn" style="left:553px;top:590px;width:73px;height:21px;line-height:21px;">OK</div>
<div class="btn" style="left:637px;top:590px;width:73px;height:21px;line-height:21px;">Отмена</div>
<div id="sub" class="a"></div>
<div class="t" style="left:313.3px;top:325.0px;font-size:12px;color:#111;">Добавить вариант</div>
<div class="t dt" style="left:525.5px;top:322.5px;font-size:14px;color:#111;">?</div>
<svg class="a" style="left:569px;top:324px" width="11" height="11" viewBox="0 0 11 11" stroke="#111" stroke-width="1.1"><path d="M0.5 0.5l10 10 M10.5 0.5l-10 10"/></svg>
<div class="t dt" style="left:311.7px;top:353.2px;font-size:11.5px;color:#000;"><u>К</u>раткое имя:</div>
<div class="inp" style="left:391px;top:352px;width:200px;height:20px"></div>
<div class="t dt" style="left:394.7px;top:356.8px;font-size:11.5px;color:#000;">Список</div>
<div class="t dt" style="left:311.7px;top:375.9px;font-size:11.5px;color:#000;"><u>З</u>начение:</div>
<div class="inp" style="left:391px;top:375px;width:200px;height:20px"></div>
<div class="t dt" style="left:394.7px;top:379.5px;font-size:11.5px;color:#000;">Список</div>
<div class="btn" style="left:433px;top:399px;width:73px;height:21px;line-height:19px;border:1.5px solid #1a73c8;line-height:20px">OK</div>
<div class="btn" style="left:517px;top:399px;width:73px;height:21px;line-height:21px">Отмена</div>
</body></html>
